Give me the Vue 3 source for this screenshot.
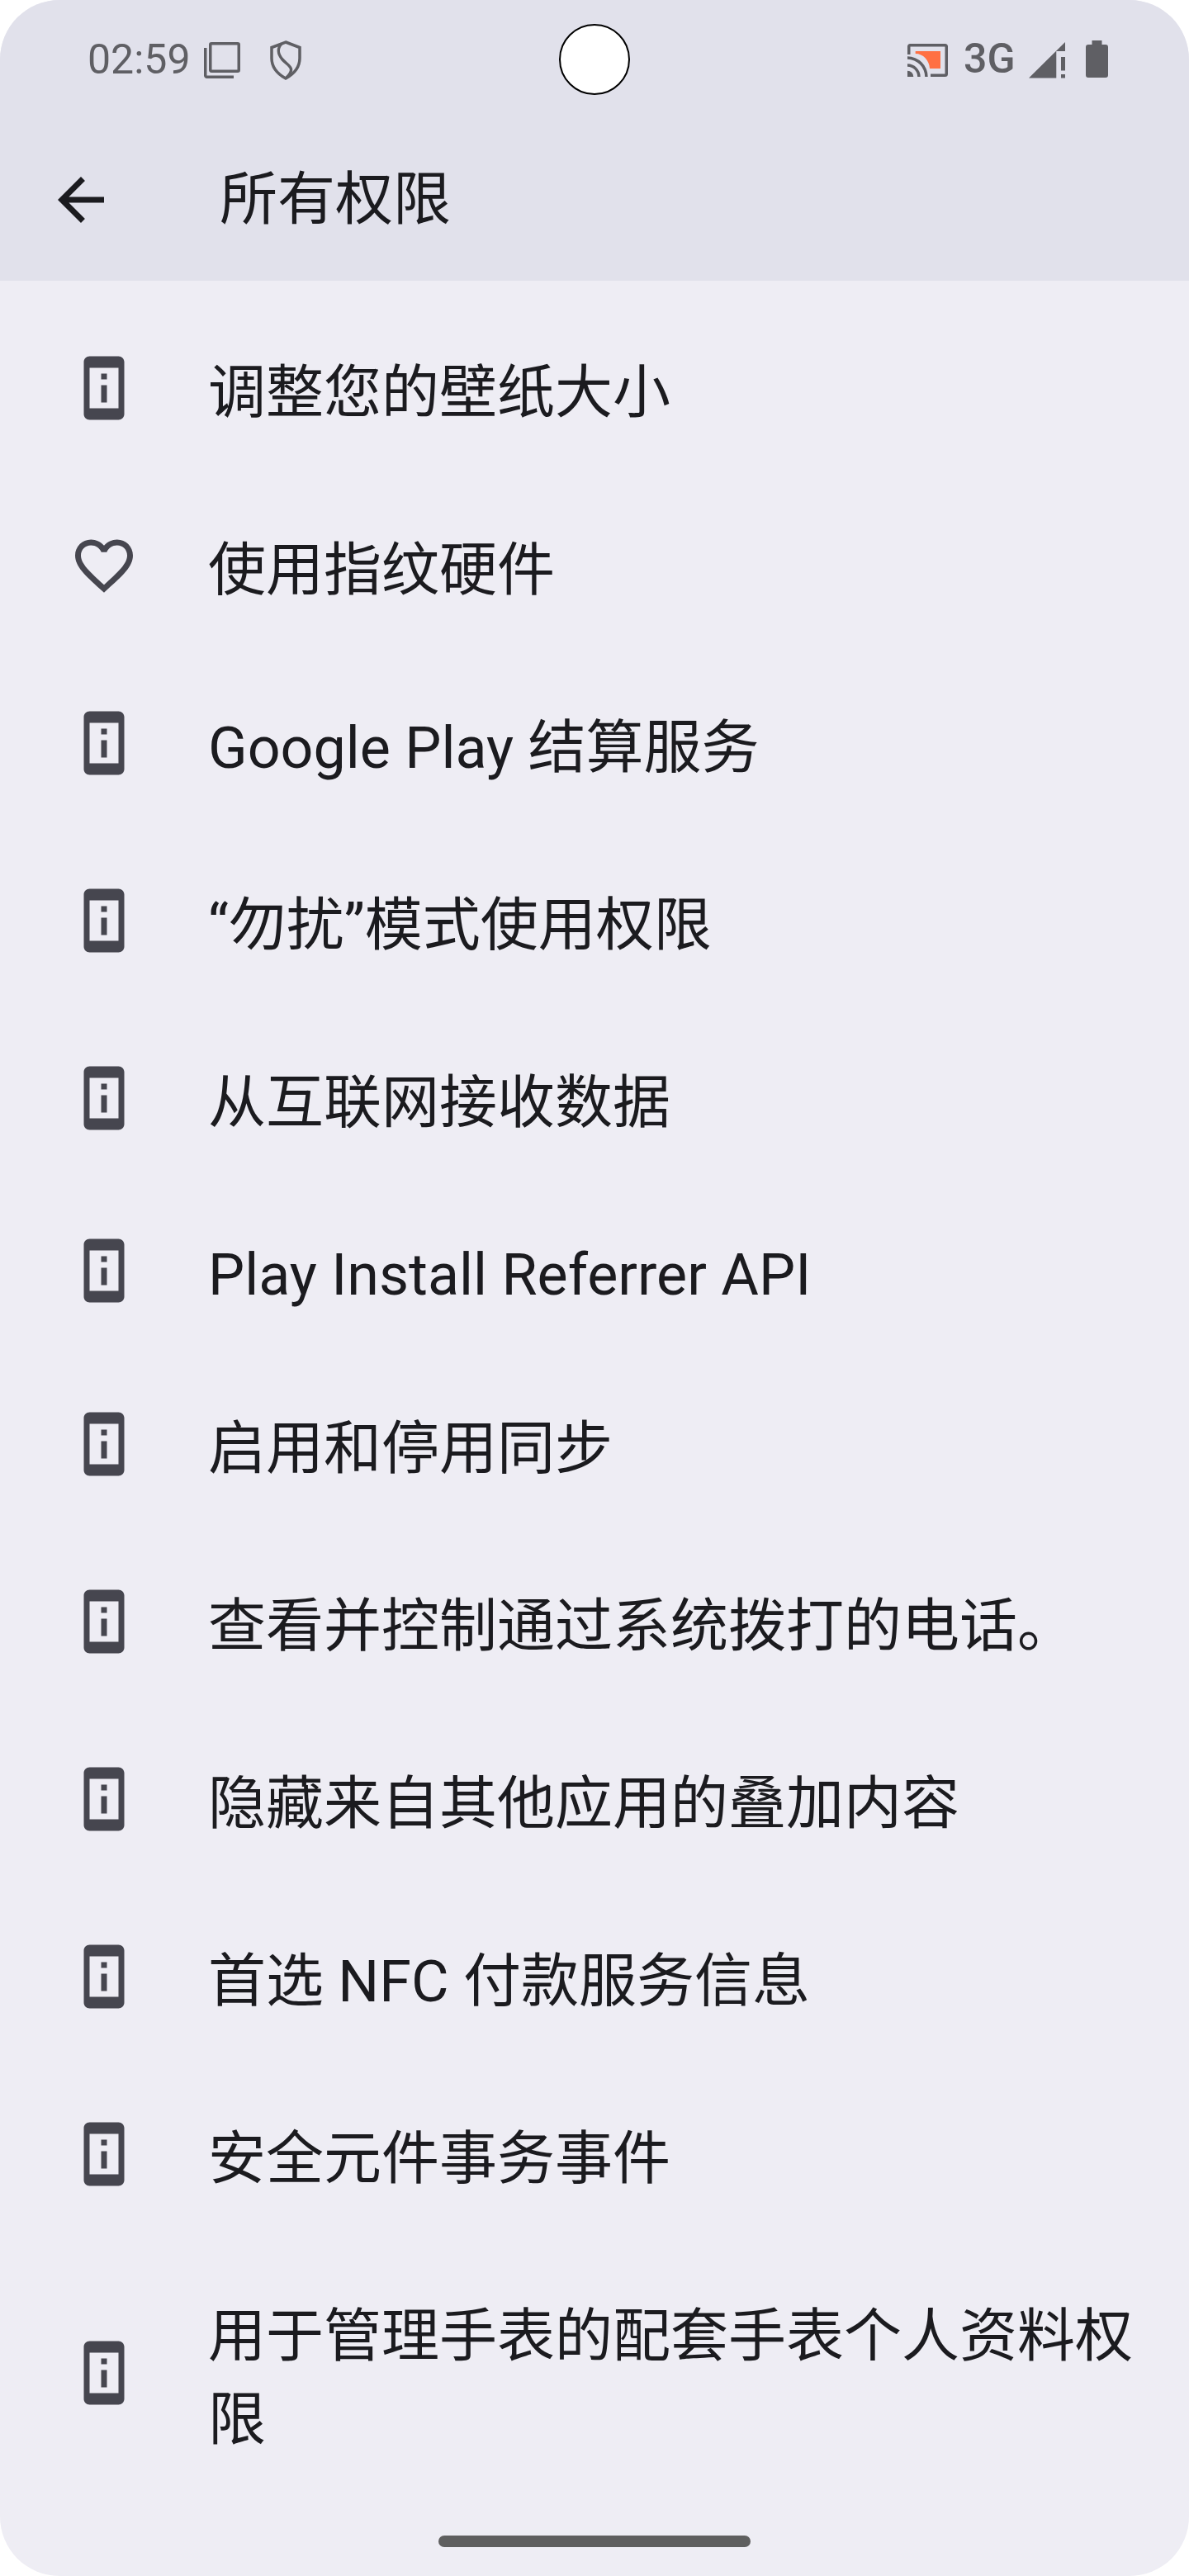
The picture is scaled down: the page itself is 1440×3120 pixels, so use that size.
<script setup>
const rows = [
  { icon: 'info', text: '调整您的壁纸大小' },
  { icon: 'heart', text: '使用指纹硬件' },
  { icon: 'info', text: 'Google Play 结算服务' },
  { icon: 'info', text: '“勿扰”模式使用权限' },
  { icon: 'info', text: '从互联网接收数据' },
  { icon: 'info', text: 'Play Install Referrer API', latin: true },
  { icon: 'info', text: '启用和停用同步' },
  { icon: 'info', text: '查看并控制通过系统拨打的电话。' },
  { icon: 'info', text: '隐藏来自其他应用的叠加内容' },
  { icon: 'info', text: '首选 NFC 付款服务信息' },
  { icon: 'info', text: '安全元件事务事件' },
  { icon: 'info', text: '用于管理手表的配套手表个人资料权限' }
]
</script>

<template>
  <div class="screen">
    <header class="header">
      <div class="status">
        <div class="status-left">
          <span class="time">02:59</span>
          <svg class="ic-copy" width="44" height="44" viewBox="0 0 44 44" fill="none" stroke="#5f5f64" stroke-width="3.5">
            <rect x="7.75" y="1.75" width="34.5" height="33.5" rx="1.5" />
            <path d="M1.75 7V40.5a1.75 1.75 0 0 0 1.75 1.75H36" />
          </svg>
          <svg class="ic-shield" width="38" height="48" viewBox="0 0 38 48" fill="none" stroke="#5f5f64" stroke-width="3.5">
            <path d="M19 2 36 8.500v13c0 10.500-7 19-17 24.500C9 40.500 2 32 2 21.500v-13z" />
            <path d="M14 4C9 9 9 16 15 23C22 31 32 33 20 45" />
          </svg>
        </div>
        <div class="status-right">
          <svg class="ic-cast" width="49" height="40" viewBox="0 0 49 40" fill="#5f5f64">
            <path d="M9.700 9H40V30H27C26.500 20 19 12 9.700 12z" fill="#ff7043" />
            <path d="M0 13V3.500A3.500 3.500 0 0 1 3.500 0H45.500A3.500 3.500 0 0 1 49 3.500V36.500A3.500 3.500 0 0 1 45.500 40H28V36.500H45.500V3.500H3.500V13z" />
            <path d="M0 15.300A24.700 24.700 0 0 1 24.700 40H21.200A21.200 21.200 0 0 0 0 18.800z" />
            <path d="M0 24.300A15.700 15.700 0 0 1 15.700 40H12.200A12.200 12.200 0 0 0 0 27.800z" />
            <path d="M0 32.700A7.300 7.300 0 0 1 7.300 40H0z" />
          </svg>
          <span class="net">3G</span>
          <svg class="ic-signal" width="44" height="44" viewBox="0 0 44 44" fill="#5f5f64">
            <path d="M0 43.500 44 0v11H33.300v32.500z" />
            <path d="M39 18h5v16.500h-5zM39 39h5v4.500h-5z" />
          </svg>
          <svg class="ic-battery" width="27" height="45" viewBox="0 0 27 45" fill="#5f5f64">
            <path d="M7.500 0h12v5H24a3 3 0 0 1 3 3v34a3 3 0 0 1-3 3H3a3 3 0 0 1-3-3V8a3 3 0 0 1 3-3h4.500z" />
          </svg>
        </div>
        <div class="camera"></div>
      </div>
      <div class="toolbar">
        <svg class="back" width="84" height="84" viewBox="0 0 24 24" fill="#1b1b1f">
          <path d="M20 11H7.830l5.590-5.590L12 4l-8 8 8 8 1.410-1.410L7.830 13H20v-2z" />
        </svg>
        <h1 class="title">所有权限</h1>
      </div>
    </header>

    <main class="list">
      <div v-for="row in rows" :key="row.text" class="row" :class="{ latin: row.latin }">
        <svg v-if="row.icon === 'info'" class="icon" width="84" height="84" viewBox="0 0 24 24" fill="#46464f">
          <path d="M13 7h-2v2h2V7zm0 4h-2v6h2v-6zm4-9.990L7 1c-1.100 0-2 .9-2 2v18c0 1.100.9 2 2 2h10c1.100 0 2-.9 2-2V3c0-1.100-.9-1.990-2-1.990zM17 19H7V5h10v14z" />
        </svg>
        <svg v-else class="icon" width="84" height="84" viewBox="0 0 24 24" fill="#46464f">
          <path d="M16.500 3c-1.740 0-3.410.81-4.500 2.090C10.910 3.810 9.240 3 7.500 3 4.420 3 2 5.420 2 8.500c0 3.780 3.400 6.860 8.550 11.540L12 21.350l1.450-1.320C18.600 15.360 22 12.280 22 8.500 22 5.420 19.580 3 16.500 3zm-4.400 15.550l-.1.1-.1-.1C7.140 14.240 4 11.390 4 8.500 4 6.500 5.500 5 7.500 5c1.540 0 3.040.99 3.570 2.360h1.870C13.460 5.990 14.960 5 16.500 5c2 0 3.500 1.500 3.500 3.500 0 2.890-3.140 5.740-7.900 10.050z" />
        </svg>
        <span class="label">{{ row.text }}</span>
      </div>
    </main>

    <div class="home"></div>
  </div>
</template>

<style>
html, body { background: #fff; margin: 0; }
</style>

<style scoped>
.screen {
  position: relative;
  width: 1440px;
  height: 3120px;
  overflow: hidden;
  border-radius: 72px;
  background: #eeedf4;
  font-family: Roboto, "Noto Sans CJK SC", sans-serif;
  color: #1b1b1f;
}
.header {
  height: 340px;
  background: #e1e1eb;
}
.status {
  position: relative;
  height: 144px;
  display: flex;
  justify-content: space-between;
  padding: 0 98px 0 106px;
  box-sizing: border-box;
}
.status-left, .status-right { display: flex; align-items: center; }
.time { font-size: 50px; color: #5f5f64; width: 141px; line-height: 1; }
.ic-copy, .ic-shield, .ic-cast { margin-top: 2px; }
.ic-shield { margin-left: 36px; }
.net { font-size: 50px; font-weight: 500; color: #5f5f64; width: 63px; margin: -2px 0 0 19px; line-height: 1; }
.ic-signal { margin: 1px 0 0 16px; }
.ic-battery { margin: -1px 0 0 25px; }
.camera {
  position: absolute;
  left: 677px;
  top: 29px;
  width: 86px;
  height: 86px;
  box-sizing: border-box;
  border: 2px solid #000;
  border-radius: 50%;
  background: #fff;
}
.toolbar {
  display: flex;
  align-items: center;
  height: 196px;
  padding-left: 56px;
  box-sizing: border-box;
}
.back { flex: none; margin-top: -1px; }
.title {
  margin: 0 0 0 126px;
  font-size: 70px;
  font-weight: 400;
  line-height: 1.2;
}
.list { display: flex; flex-direction: column; padding-top: 22px; }
.row {
  display: flex;
  align-items: center;
  padding: 57px 40px 57px 84px;
}
.row.latin { padding-top: 56px; padding-bottom: 56px; }
.row.latin .label { padding-top: 10px; }
.icon { flex: none; }
.label {
  margin-left: 84px;
  font-size: 70px;
}
.home {
  position: absolute;
  left: 531px;
  top: 3071px;
  width: 378px;
  height: 14px;
  border-radius: 7px;
  background: #5f5f5f;
}
</style>
